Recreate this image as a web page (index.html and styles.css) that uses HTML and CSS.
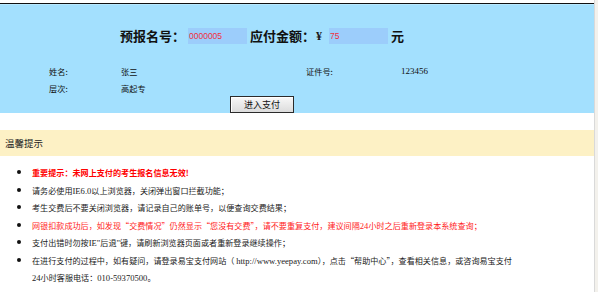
FILE: index.html
```html
<!DOCTYPE html>
<html lang="zh-CN">
<head>
  <meta charset="UTF-8">
  <meta name="viewport" content="width=device-width, initial-scale=1.0">
  <title>网上支付</title>
  <link rel="stylesheet" href="styles.css">
</head>
<body>
  <div class="page">
    <div class="main">
      <div class="pay-panel">
        <div class="pay-inner">
          <div class="title-row">
            <span class="title-label">预报名号：</span>
            <input class="title-input" type="text" value="0000005" readonly>
            <span class="title-label">应付金额：</span>
            <span class="yen">¥</span>
            <input class="title-input" type="text" value="75" readonly>
            <span class="title-label unit">元</span>
          </div>

          <div class="info-grid">
            <span>姓名:</span>
            <span>张三</span>
            <span>证件号:</span>
            <span class="num">123456</span>
            <span>层次:</span>
            <span>高起专</span>
            <span></span>
            <span></span>
          </div>

          <div class="btn-row">
            <button class="pay-btn" type="button">进入支付</button>
          </div>
        </div>
      </div>

      <div class="tips-head">温馨提示</div>

      <ul class="tips-list">
        <li class="warn">重要提示：未网上支付的考生报名信息无效!</li>
        <li>请务必使用<span class="en">IE6.0</span>以上浏览器，关闭弹出窗口拦截功能；</li>
        <li>考生交费后不要关闭浏览器，请记录自己的账单号，以便查询交费结果；</li>
        <li class="red">网银扣款成功后，如发现“交费情况”仍然显示“您没有交费”，请不要重复支付，建议间隔<span class="en">24</span>小时之后重新登录本系统查询；</li>
        <li>支付出错时勿按<span class="en">IE"</span>后退<span class="en">"</span>键，请刷新浏览器页面或者重新登录继续操作；</li>
        <li>在进行支付的过程中，如有疑问，请登录易宝支付网站（ <span class="en">http://www.yeepay.com</span>），点击“帮助中心”，查看相关信息，或咨询易宝支付<span class="en">24</span>小时客服电话：<span class="en">010-59370500</span>。</li>
      </ul>
    </div>
    <div class="edge"></div>
  </div>
</body>
</html>
```

FILE: styles.css
```css
body {
  margin: 0;
  background: #ffffff;
  font-family: "Noto Sans CJK SC", sans-serif;
  color: #1a1a1a;
}

.page {
  display: flex;
  min-height: 292px;
}

.main {
  flex: 1;
  padding-top: 3px;
}

.edge {
  width: 3px;
  background: #f3f1ec;
  border-left: 1px solid #d9d9d9;
}

/* 上方藍色區塊 */
.pay-panel {
  border-top: 1px solid #111111;
  background: #a3e0fe;
  height: 110px;
  box-sizing: border-box;
  box-shadow: inset 0 1px 0 #b9e9ff;
}

.pay-inner {
  width: 524px;
  padding-top: 24px;
}

.title-row {
  display: flex;
  justify-content: center;
  align-items: center;
  height: 16px;
}

.title-label {
  font-size: 13px;
  font-weight: bold;
  color: #111111;
  line-height: 16px;
}

.title-input {
  width: 59px;
  height: 16px;
  box-sizing: border-box;
  margin: 0 3px;
  padding: 0 1px;
  border: none;
  background: #9ccdfb;
  color: #f0303c;
  font-family: "Liberation Sans", sans-serif;
  font-size: 8.5px;
  outline: none;
}

.yen {
  font-family: "Liberation Serif", serif;
  font-size: 12px;
  font-weight: bold;
  margin: 0 4px 0 1px;
}

.info-grid {
  display: grid;
  grid-template-columns: 72px 185px 95px auto;
  grid-auto-rows: 17px;
  align-items: center;
  padding-left: 49px;
  margin-top: 18px;
  font-size: 8.2px;
  color: #111111;
}

.info-grid .num {
  font-family: "Liberation Serif", serif;
  font-size: 9px;
}

.btn-row {
  display: flex;
  justify-content: center;
}

.pay-btn {
  width: 64px;
  height: 17px;
  padding: 0;
  border: 1px solid #2b2b2b;
  box-shadow: inset 1px 1px 0 #ffffff;
  background: linear-gradient(#f8f8f8, #dcdcdc);
  font-family: "Noto Sans CJK SC", sans-serif;
  font-size: 9px;
  color: #111111;
}

/* 溫馨提示 */
.tips-head {
  margin-top: 17px;
  height: 26px;
  line-height: 26px;
  padding-left: 5px;
  background: #fdf1c5;
  font-size: 9.5px;
  color: #222222;
}

.tips-list {
  margin: 0;
  padding: 8px 0 0 32px;
  width: 484px;
  font-size: 8.1px;
  line-height: 16.6px;
  color: #222222;
}

.tips-list li::marker {
  font-size: 10px;
  color: #111111;
}

.tips-list .en {
  font-family: "Liberation Serif", serif;
  font-size: 8.6px;
}

.tips-list li.warn {
  color: #ff0000;
  font-weight: bold;
}

.tips-list li.red {
  color: #ff1a1a;
}
```
